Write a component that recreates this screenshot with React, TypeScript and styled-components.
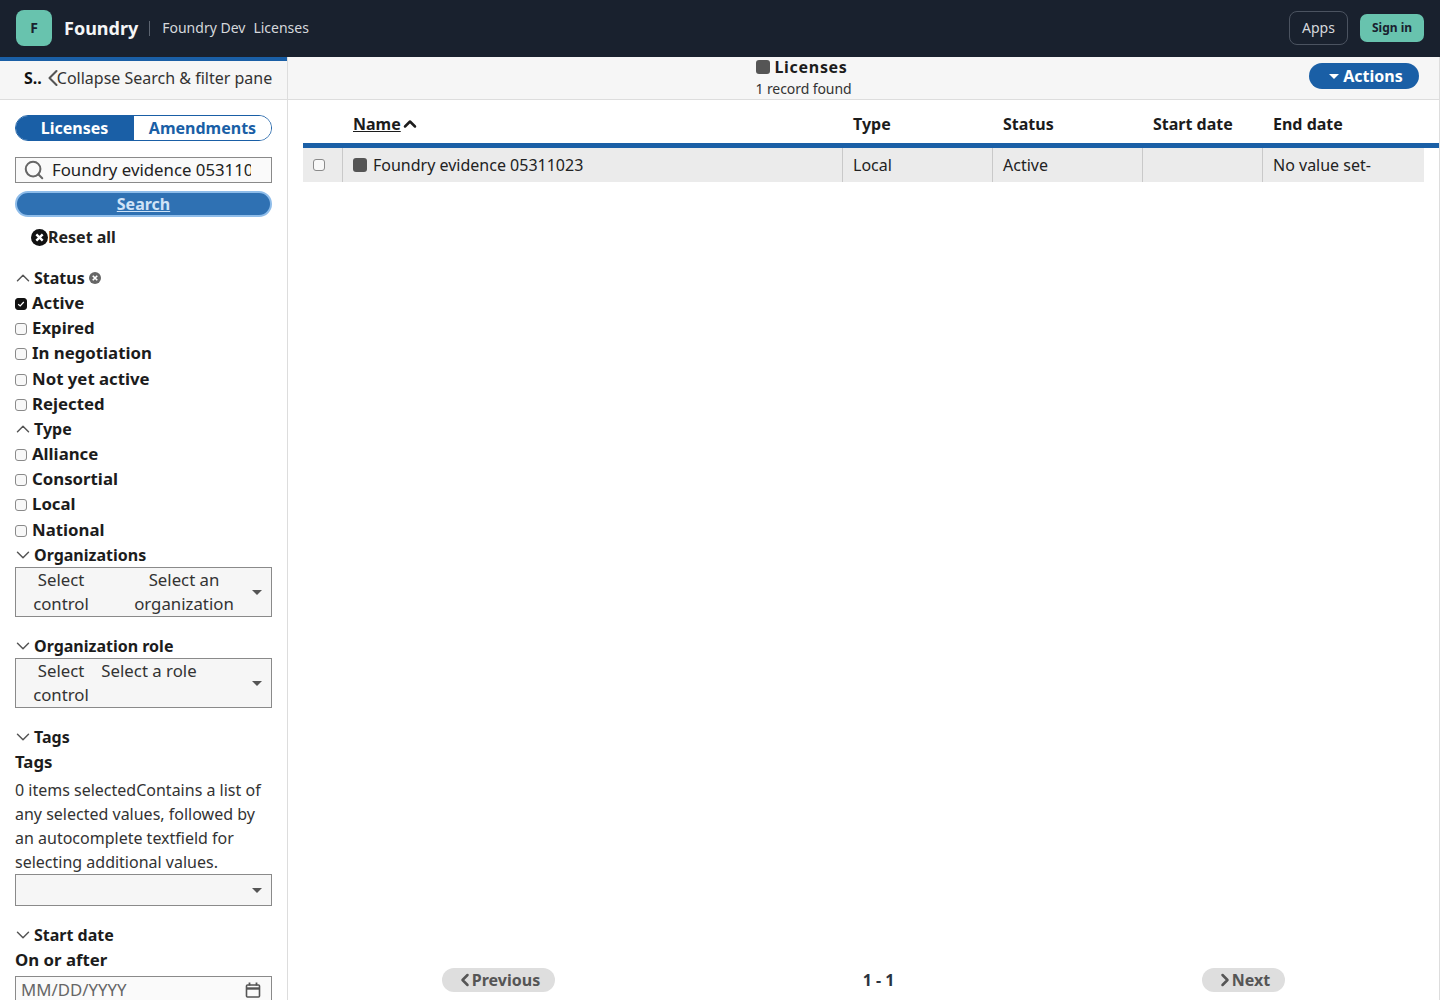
import React from "react";
import styled, { createGlobalStyle } from "styled-components";
import { ChevronDown, ChevronLeft, ChevronRight, ChevronUp, Search as SearchIcon } from "lucide-react";

const Global = createGlobalStyle`
  html, body { margin: 0; padding: 0; height: 1000px; overflow: hidden; background: #fff; }
  body { font-family: "Noto Sans", "Liberation Sans", sans-serif; font-size: 16px; color: #111; }
  * { box-sizing: border-box; }
`;

const Page = styled.div`
  display: flex;
  flex-direction: column;
  height: 1000px;
  overflow: hidden;
`;

const TopBar = styled.header`
  flex: none;
  height: 57px;
  display: flex;
  align-items: center;
  justify-content: space-between;
  padding: 0 16px 1px;
  background: #19212e;
  color: #fff;
`;
const Brand = styled.div`
  display: flex;
  align-items: center;
`;
const Logo = styled.div`
  width: 36px;
  height: 36px;
  border-radius: 8px;
  background: #68c3ae;
  color: #19212e;
  font-weight: 700;
  font-size: 14px;
  padding-bottom: 2px;
  display: flex;
  align-items: center;
  justify-content: center;
  margin-right: 12px;
`;
const BrandName = styled.span`
  font-size: 18px;
  font-weight: 700;
  color: #f4f5f6;
`;
const Divider = styled.span`
  width: 1px;
  height: 15px;
  background: #5c6470;
  margin: 0 12px 0 11px;
`;
const Crumb = styled.span`
  font-size: 14px;
  color: #d5d8dc;
  margin: 0 8px 2px 0;
`;
const TopActions = styled.div`
  display: flex;
  align-items: center;
  gap: 12px;
`;
const AppsButton = styled.div`
  width: 59px;
  height: 34px;
  border: 1px solid #4b5360;
  border-radius: 8px;
  padding-bottom: 2px;
  display: flex;
  align-items: center;
  justify-content: center;
  font-size: 14px;
  color: #d5d8dc;
`;
const SignIn = styled.div`
  width: 64px;
  height: 28px;
  border-radius: 7px;
  background: #68c3ae;
  color: #19212e;
  padding-bottom: 1px;
  display: flex;
  align-items: center;
  justify-content: center;
  font-size: 12px;
  font-weight: 700;
`;

const Body = styled.div`
  flex: 1;
  min-height: 0;
  display: flex;
`;

const Sidebar = styled.aside`
  flex: none;
  width: 288px;
  border-right: 1px solid #ddd;
  overflow: hidden;
`;
const SideHead = styled.div`
  height: 43px;
  border-top: 4px solid #1a5fa6;
  border-bottom: 1px solid #ddd;
  background: #f6f6f6;
  padding: 0 15px 5px 24px;
  display: flex;
  align-items: center;
  white-space: nowrap;
`;
const SideTitle = styled.strong`
  font-weight: 700;
  margin-right: 6px;
  font-size: 16px;
`;
const CollapseIcon = styled(ChevronLeft)`
  flex: none;
  margin: 0 -10px 0 -9px;
  color: #555;
`;
const CollapseLabel = styled.span`
  color: #333;
`;
const SideBody = styled.div`
  padding: 15px 15px 0;
`;
const Segmented = styled.div`
  display: grid;
  grid-template-columns: 118px 1fr;
  height: 26px;
  border: 1px solid #1a5fa6;
  border-radius: 13px;
  overflow: hidden;
  margin-bottom: 16px;
`;
const Segment = styled.div<{ $active?: boolean }>`
  display: flex;
  align-items: center;
  justify-content: center;
  font-weight: 700;
  padding-right: ${(p) => (p.$active ? 1 : 0)}px;
  color: ${(p) => (p.$active ? "#fff" : "#1a5fa6")};
  background: ${(p) => (p.$active ? "#1a5fa6" : "#fff")};
`;
const SearchBox = styled.div`
  height: 26px;
  border: 1px solid #8a8a8a;
  background: #fafafa;
  display: flex;
  align-items: center;
  padding: 0 20px 0 7px;
  gap: 7px;
  color: #666;
  margin-bottom: 8px;
`;
const SearchGlyph = styled(SearchIcon)`
  flex: none;
`;
const SearchInput = styled.input`
  flex: 1;
  min-width: 0;
  border: 0;
  padding: 0 0 2px;
  background: transparent;
  font: inherit;
  font-size: 16.8px;
  color: #222;
  outline: none;
`;
const SearchButton = styled.div`
  height: 26px;
  border: 2px solid #8fbdea;
  border-radius: 13px;
  background: #2f71b3;
  color: #cfe3f7;
  font-weight: 700;
  text-decoration: underline;
  display: flex;
  align-items: center;
  justify-content: center;
`;
const ResetRow = styled.div`
  display: flex;
  align-items: center;
  height: 24px;
  margin: 8px 0 15.7px 16px;
  font-weight: 700;
  color: #222;
`;
const SectionHead = styled.div`
  height: 25.2px;
  padding-top: 0.6px;
  display: flex;
  align-items: center;
  font-weight: 700;
  color: #1c1c1c;
`;
const SectionChevron = styled.span`
  display: inline-flex;
  margin: 0 0 0 -3px;
  color: #555;
`;
const ClearDot = styled.span`
  display: inline-flex;
  margin-left: 4px;
`;
const CheckRow = styled.label`
  height: 25.2px;
  display: flex;
  align-items: center;
  gap: 5px;
  font-size: 16.8px;
  font-weight: 700;
  color: #1c1c1c;
`;
const Box = styled.span<{ $checked?: boolean }>`
  width: 12px;
  height: 12px;
  border-radius: 3px;
  border: 1px solid ${(p) => (p.$checked ? "#111" : "#8a8a8a")};
  background: ${(p) => (p.$checked ? "#111" : "#f8f8f8")};
  display: inline-flex;
  align-items: center;
  justify-content: center;
  margin-top: 3px;
`;
const SelectBox = styled.div<{ $h?: number; $gap?: number; $mb?: number }>`
  height: ${(p) => p.$h ?? 50}px;
  border: 1px solid #8a8a8a;
  background: #f6f6f6;
  display: flex;
  align-items: flex-start;
  gap: ${(p) => p.$gap ?? 0}px;
  padding: 0 0 0 17px;
  position: relative;
  font-size: 16.8px;
  line-height: 24px;
  color: #333;
  margin-bottom: ${(p) => p.$mb ?? 16}px;
`;
const SelectCell = styled.div<{ $w: number }>`
  width: ${(p) => p.$w}px;
  flex: none;
  text-align: center;
`;
const Caret = styled.span`
  position: absolute;
  right: 9px;
  top: 50%;
  margin-top: -2px;
  width: 0;
  height: 0;
  border-left: 5px solid transparent;
  border-right: 5px solid transparent;
  border-top: 5px solid #555;
`;
const FieldLabel = styled.div`
  font-size: 16.8px;
  font-weight: 700;
  height: 25.2px;
  padding-bottom: 1.4px;
  display: flex;
  align-items: center;
  color: #1c1c1c;
`;
const HelpText = styled.div`
  line-height: 24px;
  color: #333;
  margin: 3px 0 0;
`;
const DateInput = styled.div`
  height: 32px;
  margin-top: 3px;
  border: 1px solid #8a8a8a;
  padding: 0 10px 4px 5px;
  display: flex;
  align-items: center;
  justify-content: space-between;
  font-size: 16.8px;
  color: #666;
  background: #fafafa;
`;

const Main = styled.main`
  flex: 1;
  min-width: 0;
  display: flex;
  flex-direction: column;
  border-right: 1px solid #ddd;
`;
const MainHead = styled.div`
  flex: none;
  height: 43px;
  background: #f6f6f6;
  border-bottom: 1px solid #ddd;
  padding: 0 20px 0 10px;
  display: flex;
  align-items: center;
  justify-content: space-between;
`;
const TitleBlock = styled.div`
  display: flex;
  flex-direction: column;
  height: 42px;
`;
const Title = styled.div`
  display: flex;
  align-items: center;
  gap: 4px;
  height: 20px;
  padding-left: 1px;
  font-weight: 700;
  letter-spacing: 0.7px;
  color: #1c1c1c;
`;
const Count = styled.div`
  font-size: 14px;
  line-height: 22px;
  margin-top: 1px;
  letter-spacing: -0.08px;
  color: #333;
`;
const Square = styled.span`
  width: 14px;
  height: 14px;
  border-radius: 3px;
  background: #555;
  flex: none;
`;
const ActionsBtn = styled.div`
  width: 110px;
  height: 26px;
  margin-top: -4px;
  padding-left: 4px;
  border-radius: 13px;
  background: #1a5fa6;
  color: #fff;
  font-weight: 700;
  display: flex;
  align-items: center;
  justify-content: center;
  gap: 4px;
`;
const WhiteCaret = styled.span`
  width: 0;
  height: 0;
  border-left: 5px solid transparent;
  border-right: 5px solid transparent;
  border-top: 5px solid #fff;
  margin-top: 1px;
`;
const TableArea = styled.div`
  flex: 1;
  min-height: 0;
  padding: 0 0 0 15px;
  display: flex;
  flex-direction: column;
`;
const HeadRow = styled.div`
  height: 48px;
  border-bottom: 5px solid #1a5fa6;
  display: grid;
  grid-template-columns: 40px 500px 150px 150px 120px 161px;
  align-items: center;
  font-weight: 700;
  color: #1c1c1c;
  padding-top: 5px;
`;
const HeadCell = styled.div`
  padding-left: 10px;
  display: flex;
  align-items: center;
`;
const SortName = styled.span`
  text-decoration: underline;
`;
const SortIcon = styled(ChevronUp)`
  margin: 0 0 0 -1px;
`;
const DataRow = styled.div`
  height: 34px;
  width: 1121px;
  background: #ebebeb;
  display: grid;
  grid-template-columns: 40px 500px 150px 150px 120px 161px;
  color: #222;
`;
const DataCell = styled.div<{ $first?: boolean }>`
  padding-left: ${(p) => (p.$first ? 0 : 10)}px;
  border-right: 1px solid #c9c9c9;
  display: flex;
  align-items: center;
  justify-content: ${(p) => (p.$first ? "center" : "flex-start")};
  gap: 6px;
  &:last-child { border-right: 0; }
`;
const RowCheck = styled(Box)`
  margin: 0 7px 0 0;
`;
const Pager = styled.div`
  margin-top: auto;
  width: 1121px;
  height: 32px;
  padding: 0 139px 8px;
  display: flex;
  align-items: center;
  justify-content: space-between;
`;
const PagerButton = styled.div<{ $w: number }>`
  width: ${(p) => p.$w}px;
  height: 24px;
  border-radius: 12px;
  background: #dedede;
  color: #555;
  font-weight: 700;
  display: flex;
  align-items: center;
  justify-content: center;
  svg { margin: 0 -3px 0 -2px; }
`;
const PagerCount = styled.div`
  font-weight: 700;
  color: #2a3340;
  width: 32px;
  text-align: center;
  white-space: nowrap;
`;

const Check = ({ label, checked }: { label: string; checked?: boolean }) => (
  <CheckRow>
    <Box $checked={checked}>
      {checked && (
        <svg width="8" height="8" viewBox="0 0 8 8">
          <path d="M1.2 4.2 3.2 6 6.8 2" fill="none" stroke="#fff" strokeWidth="1.2" />
        </svg>
      )}
    </Box>
    {label}
  </CheckRow>
);

const Section = ({ label, open, children }: { label: string; open?: boolean; children?: React.ReactNode }) => (
  <SectionHead>
    <SectionChevron>
      {open ? <ChevronUp size={22} strokeWidth={1.6} /> : <ChevronDown size={22} strokeWidth={1.6} />}
    </SectionChevron>
    {label}
    {children}
  </SectionHead>
);

const XCircle = ({ size, color }: { size: number; color: string }) => (
  <svg width={size} height={size} viewBox="0 0 16 16">
    <circle cx="8" cy="8" r="8" fill={color} />
    <path d="M5 5l6 6M11 5l-6 6" stroke="#fff" strokeWidth="2.2" />
  </svg>
);

const Calendar = () => (
  <svg width="16" height="16" viewBox="0 0 16 16" fill="none" stroke="#555">
    <rect x="1.5" y="3" width="13" height="12" rx="1" strokeWidth="1.6" />
    <path d="M1.5 6.5h13" strokeWidth="2.4" />
    <path d="M4.5 0.5v3M11.5 0.5v3" strokeWidth="1.8" />
  </svg>
);

export default function App() {
  return (
    <Page>
      <Global />
      <TopBar>
        <Brand>
          <Logo>F</Logo>
          <BrandName>Foundry</BrandName>
          <Divider />
          <Crumb>Foundry Dev</Crumb>
          <Crumb>Licenses</Crumb>
        </Brand>
        <TopActions>
          <AppsButton>Apps</AppsButton>
          <SignIn>Sign in</SignIn>
        </TopActions>
      </TopBar>
      <Body>
        <Sidebar>
          <SideHead>
            <SideTitle>S..</SideTitle>
            <CollapseIcon size={28} strokeWidth={1.8} />
            <CollapseLabel>Collapse Search &amp; filter pane</CollapseLabel>
          </SideHead>
          <SideBody>
            <Segmented>
              <Segment $active>Licenses</Segment>
              <Segment>Amendments</Segment>
            </Segmented>
            <SearchBox>
              <SearchGlyph size={22} strokeWidth={2.2} />
              <SearchInput readOnly value="Foundry evidence 05311023" />
            </SearchBox>
            <SearchButton>Search</SearchButton>
            <ResetRow>
              <XCircle size={17} color="#111" />
              Reset all
            </ResetRow>
            <Section label="Status" open>
              <ClearDot>
                <XCircle size={12} color="#666" />
              </ClearDot>
            </Section>
            <Check label="Active" checked />
            <Check label="Expired" />
            <Check label="In negotiation" />
            <Check label="Not yet active" />
            <Check label="Rejected" />
            <Section label="Type" open />
            <Check label="Alliance" />
            <Check label="Consortial" />
            <Check label="Local" />
            <Check label="National" />
            <Section label="Organizations" />
            <SelectBox $gap={45}>
              <SelectCell $w={56}>Select control</SelectCell>
              <SelectCell $w={100}>Select an organization</SelectCell>
              <Caret />
            </SelectBox>
            <Section label="Organization role" />
            <SelectBox $gap={12}>
              <SelectCell $w={56}>Select control</SelectCell>
              <SelectCell $w={96}>Select a role</SelectCell>
              <Caret />
            </SelectBox>
            <Section label="Tags" />
            <FieldLabel>Tags</FieldLabel>
            <HelpText>
              0 items selectedContains a list of any selected values, followed by an autocomplete textfield for selecting additional values.
            </HelpText>
            <SelectBox $h={32} $mb={17}>
              <Caret />
            </SelectBox>
            <Section label="Start date" />
            <FieldLabel>On or after</FieldLabel>
            <DateInput>
              MM/DD/YYYY
              <Calendar />
            </DateInput>
          </SideBody>
        </Sidebar>
        <Main>
          <MainHead>
            <span />
            <TitleBlock>
              <Title>
                <Square />
                Licenses
              </Title>
              <Count>1 record found</Count>
            </TitleBlock>
            <ActionsBtn>
              <WhiteCaret />
              Actions
            </ActionsBtn>
          </MainHead>
          <TableArea>
            <HeadRow>
              <HeadCell />
              <HeadCell>
                <SortName>Name</SortName>
                <SortIcon size={20} strokeWidth={3} />
              </HeadCell>
              <HeadCell>Type</HeadCell>
              <HeadCell>Status</HeadCell>
              <HeadCell>Start date</HeadCell>
              <HeadCell>End date</HeadCell>
            </HeadRow>
            <DataRow>
              <DataCell $first>
                <RowCheck />
              </DataCell>
              <DataCell>
                <Square />
                Foundry evidence 05311023
              </DataCell>
              <DataCell>Local</DataCell>
              <DataCell>Active</DataCell>
              <DataCell />
              <DataCell>No value set-</DataCell>
            </DataRow>
            <Pager>
              <PagerButton $w={113}>
                <ChevronLeft size={20} strokeWidth={3} />
                Previous
              </PagerButton>
              <PagerCount>1 - 1</PagerCount>
              <PagerButton $w={83}>
                <ChevronRight size={20} strokeWidth={3} />
                Next
              </PagerButton>
            </Pager>
          </TableArea>
        </Main>
      </Body>
    </Page>
  );
}
